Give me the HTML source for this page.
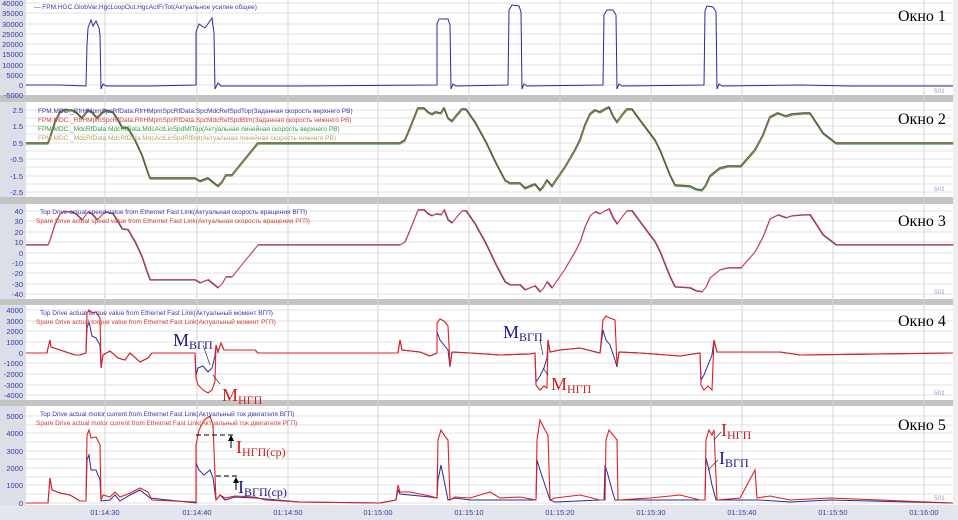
<!DOCTYPE html>
<html><head><meta charset="utf-8"><style>
html,body{margin:0;padding:0;background:#fff}
svg{display:block}
.ax{font-family:"Liberation Sans",sans-serif;font-size:7.5px;fill:#3a3aa8}
.lg{font-family:"Liberation Sans","Noto Sans CJK SC",sans-serif;font-size:6.5px}
.ok{font-family:"Liberation Serif","Noto Serif CJK SC",serif;font-size:16px;fill:#000}
.an{font-family:"Liberation Serif","Noto Serif CJK SC",serif;font-size:18px}
.sb{font-size:12px}
</style></head><body>
<svg width="958" height="520" viewBox="0 0 958 520" xmlns="http://www.w3.org/2000/svg">
<rect width="958" height="520" fill="#dcdfe8"/>
<rect x="0" y="95" width="958" height="7" fill="#c4c4c4"/>
<rect x="0" y="197" width="958" height="7" fill="#c4c4c4"/>
<rect x="0" y="299" width="958" height="6" fill="#c4c4c4"/>
<rect x="0" y="400" width="958" height="6" fill="#c4c4c4"/>
<g fill="#fff">
<rect x="26" y="0" width="927" height="95"/>
<rect x="26" y="102" width="927" height="95"/>
<rect x="26" y="204" width="927" height="95"/>
<rect x="26" y="305" width="927" height="95"/>
<rect x="26" y="406" width="927" height="99"/>
</g>
<rect x="953" y="0" width="5" height="505" fill="#eeeeee"/>
<rect x="0" y="505" width="958" height="15" fill="#e4e6ee"/>
<g stroke="#e2e2e2" stroke-width="1">
<path d="M26 3H953M26 13H953M26 24H953M26 34H953M26 44H953M26 54H953M26 65H953M26 75H953M26 85H953"/>
<path d="M26 110H953M26 118H953M26 126H953M26 134H953M26 143H953M26 151H953M26 159H953M26 167H953M26 176H953M26 184H953M26 192H953"/>
<path d="M26 211H953M26 221H953M26 232H953M26 242H953M26 253H953M26 263H953M26 273H953M26 284H953M26 294H953"/>
<path d="M26 310H953M26 321H953M26 331H953M26 342H953M26 353H953M26 363H953M26 374H953M26 385H953M26 395H953"/>
<path d="M26 416H953M26 425H953M26 433H953M26 442H953M26 451H953M26 459H953M26 468H953M26 477H953M26 485H953M26 494H953M26 503H953"/>
</g>
<g stroke="#d6d6d6" stroke-width="1">
<path d="M105 0V505M197 0V505M288 0V505M378 0V505M469 0V505M560 0V505M651 0V505M742 0V505M833 0V505M924 0V505"/>
</g>
<g class="ax" text-anchor="end">
<text x="23" y="6">40000</text><text x="23" y="16">35000</text><text x="23" y="27">30000</text><text x="23" y="37">25000</text><text x="23" y="47">20000</text><text x="23" y="57">15000</text><text x="23" y="68">10000</text><text x="23" y="78">5000</text><text x="23" y="88">0</text><text x="23" y="98">-5000</text>
<text x="23" y="113">2.5</text><text x="23" y="129">1.5</text><text x="23" y="146">0.5</text><text x="23" y="162">-0.5</text><text x="23" y="179">-1.5</text><text x="23" y="195">-2.5</text>
<text x="23" y="214">40</text><text x="23" y="224">30</text><text x="23" y="235">20</text><text x="23" y="245">10</text><text x="23" y="256">0</text><text x="23" y="266">-10</text><text x="23" y="276">-20</text><text x="23" y="287">-30</text><text x="23" y="297">-40</text>
<text x="23" y="313">4000</text><text x="23" y="324">3000</text><text x="23" y="334">2000</text><text x="23" y="345">1000</text><text x="23" y="356">0</text><text x="23" y="366">-1000</text><text x="23" y="377">-2000</text><text x="23" y="388">-3000</text><text x="23" y="398">-4000</text>
<text x="23" y="419">5000</text><text x="23" y="436">4000</text><text x="23" y="454">3000</text><text x="23" y="471">2000</text><text x="23" y="488">1000</text><text x="23" y="506">0</text>
</g>
<g class="ax" text-anchor="middle">
<text x="105" y="515">01:14:30</text><text x="197" y="515">01:14:40</text><text x="288" y="515">01:14:50</text><text x="378" y="515">01:15:00</text><text x="469" y="515">01:15:10</text><text x="560" y="515">01:15:20</text><text x="651" y="515">01:15:30</text><text x="742" y="515">01:15:40</text><text x="833" y="515">01:15:50</text><text x="924" y="515">01:16:00</text>
</g>
<polyline fill="none" stroke="#2a2aa0" stroke-width="1" points="26,85 60,85 86,86 87,45 88,28 91,20 93,26 96,21 99,28 100,35 101,89 103,84 106,86 150,86 196,85 196,32 199,24 205,28 212,18 214,33 215,89 218,83 221,86 300,86 437,85 437,24 439,19 448,19 450,25 451,89 453,84 456,86 508,85 509,10 512,5 519,6 521,12 522,89 524,84 527,86 603,85 604,15 607,10 613,10 616,15 617,89 619,84 622,86 704,85 705,11 707,6 713,7 716,12 717,89 719,84 722,86 800,85 850,86 953,86"/>
<text class="lg" x="34" y="9" fill="#3a3aa8">— FPM.HGC.GlobVar.HgcLoopOut.HgcActFrTot(Актуальное усилие общее)</text>
<text class="ok" x="898" y="21">Окно 1</text>
<defs>
<polyline id="sp" fill="none" points="26,143 48,143 50,138 55,122 60,112 63,110 72,110 77,113 82,118 88,110 92,112 97,118 105,110 113,112 118,120 122,127 128,128 135,140 142,155 147,170 150,178 155,178 195,178 200,181 208,178 213,182 218,186 222,182 226,175 232,175 240,165 258,143 400,143 405,140 410,128 414,118 418,108 424,108 428,112 432,114 436,112 441,113 444,108 448,118 452,121 456,116 462,109 466,109 475,122 486,142 496,163 505,180 510,183 520,183 525,188 530,186 535,184 540,190 543,187 547,180 552,186 556,180 565,167 575,150 580,140 585,125 590,114 595,110 600,112 605,109 609,107 613,116 617,122 622,115 627,109 632,109 640,120 655,140 660,150 670,175 675,185 690,186 696,189 702,190 706,185 710,176 720,168 728,166 741,166 748,158 755,150 763,135 770,117 778,113 786,116 792,114 804,113 810,113 823,133 836,143 953,143"/>
</defs>
<use href="#sp" stroke="#c8c070" stroke-width="1.5"/>
<use href="#sp" stroke="#4a9a4a" stroke-width="1.2" transform="translate(0,1)"/>
<use href="#sp" stroke="#9a6a3a" stroke-width="1" transform="translate(0.5,0)"/>
<use href="#sp" stroke="#404060" stroke-width="0.6" transform="translate(-0.5,-0.5)"/>
<g class="lg">
<text x="38" y="113" fill="#3a3aa8">FPM.MDC._RfrHMpmSpcRfData.RfrHMpmSpcRfData.SpcMdcRefSpdTop(Заданная скорость верхнего РВ)</text>
<text x="38" y="122" fill="#d04040">FPM.MDC._RfrHMpmSpcRfData.RfrHMpmSpcRfData.SpcMdcRefSpdBtm(Заданная скорость нижнего РВ)</text>
<text x="38" y="131" fill="#3a9a3a">FPM.MDC._MdcRfData.MdcRfData.MdcActLinSpdMtTop(Актуальная линейная скорость верхнего РВ)</text>
<text x="38" y="140" fill="#b0a860">FPM.MDC._MdcRfData.MdcRfData.MdcActLinSpdRfBot(Актуальная линейная скорость нижнего РВ)</text>
</g>
<text class="ok" x="898" y="124">Окно 2</text>
<use href="#sp" stroke="#3030a0" stroke-width="1" transform="translate(0,102)"/>
<use href="#sp" stroke="#e04848" stroke-width="1" transform="translate(0.5,101.5)"/>
<g class="lg">
<text x="40" y="214" fill="#3a3aa8">Top Drive actual speed value from Ethernet Fast Link(Актуальная скорость вращения ВГП)</text>
<text x="36" y="223" fill="#d04040">Spare Drive actual speed value from Ethernet Fast Link(Актуальная скорость вращения РГП)</text>
</g>
<text class="ok" x="898" y="226">Окно 3</text>
<polyline fill="none" stroke="#2a2aa0" stroke-width="1" points="26,353 47,353 48,348 50,340 51,347 60,350 75,355 80,355 86,353 87,328 89,322 92,336 96,338 100,345 101,368 103,355 110,351 118,358 125,360 130,353 140,362 148,358 152,353 195,353 196,375 198,368 203,366 208,372 212,368 215,356 216,345 218,352 221,343 224,350 255,350 258,353 398,353 400,340 402,350 420,352 430,356 437,353 437,332 440,340 444,345 448,350 450,367 452,352 470,353 500,355 530,354 535,353 536,382 540,376 544,368 547,358 548,340 550,352 560,350 580,348 600,353 603,330 606,340 610,345 615,360 617,367 619,352 640,353 680,356 700,353 701,380 704,375 708,365 712,355 714,340 717,352 740,352 780,352 800,355 953,353"/>
<polyline fill="none" stroke="#e02020" stroke-width="1.1" points="26,353 47,353 48,348 50,340 51,347 60,350 75,355 80,355 86,353 87,313 89,310 92,313 96,312 100,318 101,367 103,355 110,351 118,358 125,360 130,353 140,362 148,358 152,353 195,353 196,378 198,385 203,390 208,393 212,390 215,381 216,345 218,352 221,343 224,350 255,350 258,353 398,353 400,340 402,350 420,352 430,356 437,353 437,323 440,319 444,321 448,326 450,366 452,352 470,353 500,355 530,354 535,353 536,385 540,390 544,386 547,388 548,340 550,352 560,350 580,348 600,353 603,320 606,316 610,318 615,320 617,365 619,352 640,353 680,356 700,353 701,385 704,390 708,386 712,390 714,340 717,352 740,352 780,352 800,355 953,353"/>
<g class="lg">
<text x="40" y="315" fill="#3a3aa8">Top Drive actual torque value from Ethernet Fast Link(Актуальный момент ВГП)</text>
<text x="36" y="324" fill="#d04040">Spare Drive actual torque value from Ethernet Fast Link(Актуальный момент РГП)</text>
</g>
<text class="ok" x="898" y="326">Окно 4</text>
<text class="an" x="173" y="346" fill="#1a1a8a">M<tspan class="sb" dy="3">ВГП</tspan></text>
<text class="an" x="222" y="401" fill="#d02020">M<tspan class="sb" dy="3">НГП</tspan></text>
<text class="an" x="503" y="338" fill="#1a1a8a">M<tspan class="sb" dy="3">ВГП</tspan></text>
<text class="an" x="551" y="390" fill="#d02020">M<tspan class="sb" dy="3">НГП</tspan></text>
<path d="M203 345L210 365M220 384L213 375M540 340L543 355M548 375L543 368" stroke="#333" stroke-width="0.7"/>
<polyline fill="none" stroke="#2a2aa0" stroke-width="1" points="26,503 48,503 50,478 52,490 60,493 70,495 80,501 86,501 87,460 89,455 91,470 96,470 100,480 101,501 110,500 115,495 120,501 130,495 140,490 150,498 196,503 196,463 199,470 204,475 210,470 213,478 216,500 220,495 225,500 235,497 255,498 300,502 380,503 396,500 398,490 400,494 430,497 437,498 438,480 441,465 444,480 448,500 455,498 470,500 520,500 536,500 537,460 540,470 545,485 550,500 555,502 600,500 604,500 605,465 608,475 612,490 615,500 650,500 700,500 705,500 706,458 709,470 712,485 716,500 740,500 760,500 790,502 830,500 953,503"/>
<polyline fill="none" stroke="#e02020" stroke-width="1.1" points="26,503 48,503 50,478 52,490 60,493 70,495 80,501 86,501 87,435 89,430 91,438 96,437 100,445 101,500 103,495 110,497 115,492 120,497 128,494 140,488 148,492 152,500 196,502 196,445 199,430 204,420 210,416 213,425 216,500 220,495 225,498 235,496 255,497 265,500 300,502 380,503 396,500 398,485 400,492 410,492 430,496 437,498 438,440 441,430 444,435 448,440 450,500 455,497 470,498 490,492 500,498 520,497 536,500 537,440 540,420 545,430 548,435 550,500 555,498 580,495 600,500 605,500 606,440 609,430 613,435 617,440 618,500 650,498 680,495 700,500 705,500 706,440 709,430 712,435 714,430 717,500 740,498 755,470 757,498 770,496 790,500 830,498 953,503"/>
<g class="lg">
<text x="40" y="416" fill="#3a3aa8">Top Drive actual motor current from Ethernet Fast Link(Актуальный ток двигателя ВГП)</text>
<text x="36" y="425" fill="#d04040">Spare Drive actual motor current from Ethernet Fast Link(Актуальный ток двигателя РГП)</text>
</g>
<text class="ok" x="898" y="430">Окно 5</text>
<path d="M196 435H236M216 476H240" stroke="#000" stroke-width="1" stroke-dasharray="5,3"/>
<path d="M231 440V448M236 481V490" stroke="#000" stroke-width="1"/>
<path d="M228 441L231 435L234 441ZM233 483L236 477L239 483Z" fill="#000"/>
<text class="an" x="236" y="453" fill="#d02020">I<tspan class="sb" dy="3">НГП(ср)</tspan></text>
<text class="an" x="238" y="493" fill="#1a1a8a">I<tspan class="sb" dy="3">ВГП(ср)</tspan></text>
<text class="an" x="721" y="436" fill="#d02020">I<tspan class="sb" dy="3">НГП</tspan></text>
<text class="an" x="719" y="464" fill="#1a1a8a">I<tspan class="sb" dy="3">ВГП</tspan></text>
<path d="M721 432L714 440M718 460L708 470" stroke="#333" stroke-width="0.7"/>
<g class="lg" fill="#9a9ad0"><text x="934" y="93">501</text><text x="934" y="191">501</text><text x="934" y="294">501</text><text x="934" y="395">501</text><text x="934" y="500">501</text></g>
</svg>
</body></html>
